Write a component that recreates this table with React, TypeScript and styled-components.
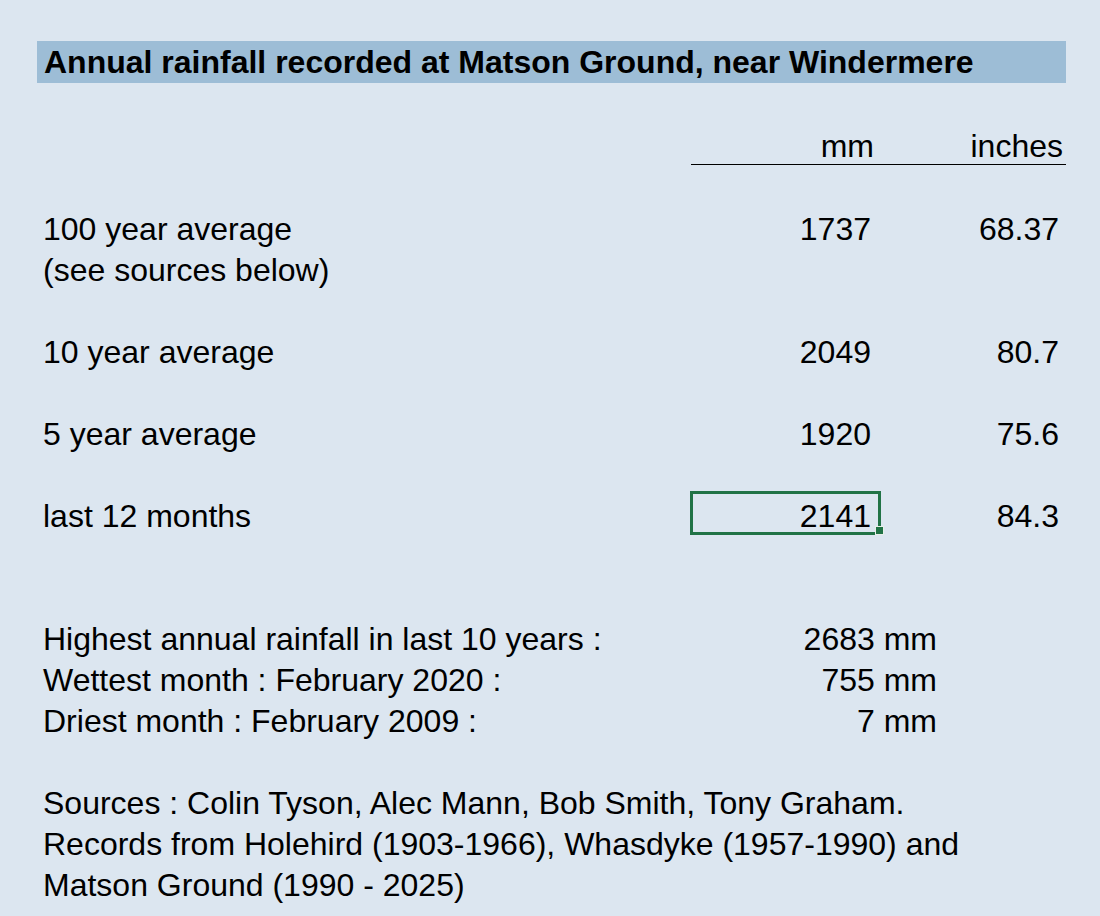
import React from "react";
import styled, { createGlobalStyle } from "styled-components";

const Global = createGlobalStyle`
  html, body {
    margin: 0;
    padding: 0;
    background: #dce6f0;
  }
  body {
    font-family: "Liberation Sans", Arial, sans-serif;
    color: #000;
  }
`;

const ROW = 41;

const Sheet = styled.div`
  width: 1100px;
  min-height: 916px;
  box-sizing: border-box;
  padding: 41px 0 0 37px;
  background: #dce6f0;
  font-family: "Liberation Sans", Arial, sans-serif;
  font-size: 32px;
  line-height: 35px;
  color: #000;
  overflow: hidden;
`;

const TitleBand = styled.div`
  width: 1029px;
  height: 42px;
  box-sizing: border-box;
  background: #9dbdd6;
  display: flex;
  align-items: flex-end;
  padding: 0 0 3px 7px;
  font-weight: 700;
  white-space: nowrap;
`;

const Spacer = styled.div<{ $rows: number }>`
  height: ${(p) => p.$rows * ROW}px;
`;

const TableRow = styled.div`
  display: grid;
  grid-template-columns: 654px 189px 186px;
  height: ${ROW}px;
  align-items: end;
`;

const Label = styled.div`
  padding-left: 6px;
  white-space: nowrap;
`;

const Cell = styled.div<{ $head?: boolean; $pad?: number }>`
  position: relative;
  height: 100%;
  box-sizing: border-box;
  display: flex;
  align-items: flex-end;
  justify-content: flex-end;
  padding-right: ${(p) => p.$pad ?? 9}px;
  border-bottom: ${(p) => (p.$head ? "1px solid #000" : "none")};
  white-space: nowrap;
`;

const Selection = styled.div`
  position: absolute;
  top: -2px;
  bottom: -1px;
  left: -1px;
  right: -1px;
  border: 3px solid #217346;
  pointer-events: none;
`;

const Handle = styled.div`
  position: absolute;
  right: -6px;
  bottom: -3px;
  width: 7px;
  height: 7px;
  background: #217346;
  border: 1px solid #e8efe9;
`;

const StatRow = styled.div`
  display: grid;
  grid-template-columns: 708px 200px;
  height: ${ROW}px;
  align-items: end;
`;

const StatValue = styled.div`
  text-align: right;
  padding-right: 8px;
  white-space: nowrap;
`;

const TextRow = styled.div`
  height: ${ROW}px;
  display: flex;
  align-items: flex-end;
  padding-left: 6px;
  white-space: nowrap;
`;

type DataRow = { label: string; mm: string; inches: string; sub?: string; selected?: boolean; gapAfter: number };

const rows: DataRow[] = [
  { label: "100 year average", mm: "1737", inches: "68.37", sub: "(see sources below)", gapAfter: 1 },
  { label: "10 year average", mm: "2049", inches: "80.7", gapAfter: 1 },
  { label: "5 year average", mm: "1920", inches: "75.6", gapAfter: 1 },
  { label: "last 12 months", mm: "2141", inches: "84.3", selected: true, gapAfter: 2 },
];

const stats = [
  { label: "Highest annual rainfall in last 10 years :", value: "2683 mm" },
  { label: "Wettest month : February 2020 :", value: "755 mm" },
  { label: "Driest month : February 2009 :", value: "7 mm" },
];

const sources = [
  "Sources : Colin Tyson, Alec Mann, Bob Smith, Tony Graham.",
  "Records from Holehird (1903-1966), Whasdyke (1957-1990) and",
  "Matson Ground (1990 - 2025)",
];

export default function App() {
  return (
    <>
      <Global />
      <Sheet>
        <TitleBand>Annual rainfall recorded at Matson Ground, near Windermere</TitleBand>
        <Spacer $rows={1} />
        <TableRow>
          <Label />
          <Cell $head $pad={6}>mm</Cell>
          <Cell $head $pad={3}>inches</Cell>
        </TableRow>
        <Spacer $rows={1} />
        {rows.map((r) => (
          <React.Fragment key={r.label}>
            <TableRow>
              <Label>{r.label}</Label>
              <Cell>
                {r.mm}
                {r.selected && (
                  <Selection>
                    <Handle />
                  </Selection>
                )}
              </Cell>
              <Cell $pad={7}>{r.inches}</Cell>
            </TableRow>
            {r.sub && (
              <TableRow>
                <Label>{r.sub}</Label>
              </TableRow>
            )}
            <Spacer $rows={r.gapAfter} />
          </React.Fragment>
        ))}
        {stats.map((s) => (
          <StatRow key={s.label}>
            <Label>{s.label}</Label>
            <StatValue>{s.value}</StatValue>
          </StatRow>
        ))}
        <Spacer $rows={1} />
        {sources.map((t) => (
          <TextRow key={t}>{t}</TextRow>
        ))}
      </Sheet>
    </>
  );
}
